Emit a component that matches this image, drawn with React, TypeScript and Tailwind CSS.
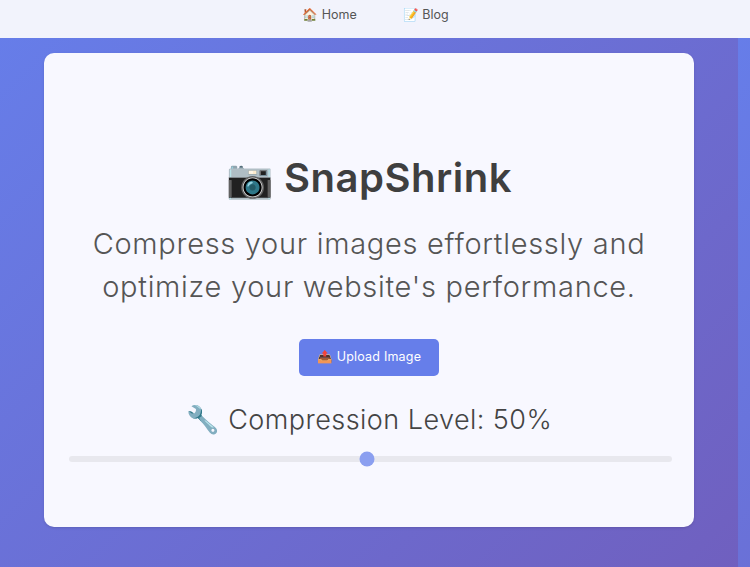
export default function App() {
  return (
    <div className="h-[567px] w-[750px] overflow-hidden flex flex-col bg-[linear-gradient(135deg,#667eea,#764ba2)] bg-[length:738px_1450px] font-['Inter',sans-serif]">
      <nav className="h-[38px] shrink-0 bg-[#f2f3fc] flex items-start justify-center gap-[46px] pt-[7px] pl-[1px] text-[12.5px] leading-[16px] text-[#555]">
        <span>🏠 Home</span>
        <span>📝 Blog</span>
      </nav>
      <div className="flex-1 pl-[44px] pr-[56px] pt-[15px]">
        <div className="h-[474px] rounded-[10px] bg-[#f8f8ff] shadow-sm flex flex-col items-center pt-[100px] px-[25px]">
          <h1 className="text-[40px] leading-[50px] font-semibold tracking-[0.5px] text-[#3f3f3f]"><span className="text-[38px]">📷</span> SnapShrink</h1>
          <p className="mt-[19px] text-center text-[29px] leading-[43px] tracking-[0.7px] font-light text-[#555]">Compress your images effortlessly and<br />optimize your website's performance.</p>
          <button className="mt-[31px] h-[37px] w-[140px] rounded-[5px] bg-[#667eea] text-white text-[12.5px] tracking-[0.2px]">📤 Upload Image</button>
          <div className="mt-[25px] text-[27px] leading-[38px] tracking-[0.45px] font-light text-[#444]">🔧 Compression Level: 50%</div>
          <div className="relative mt-[17px] h-[6px] w-[603px] shrink-0 self-start rounded-full bg-[#e8e8ee]">
            <div className="absolute left-[298px] top-1/2 h-[15px] w-[15px] -translate-x-1/2 -translate-y-1/2 rounded-full bg-[#8b9ff0]" />
          </div>
        </div>
      </div>
    </div>
  );
}
